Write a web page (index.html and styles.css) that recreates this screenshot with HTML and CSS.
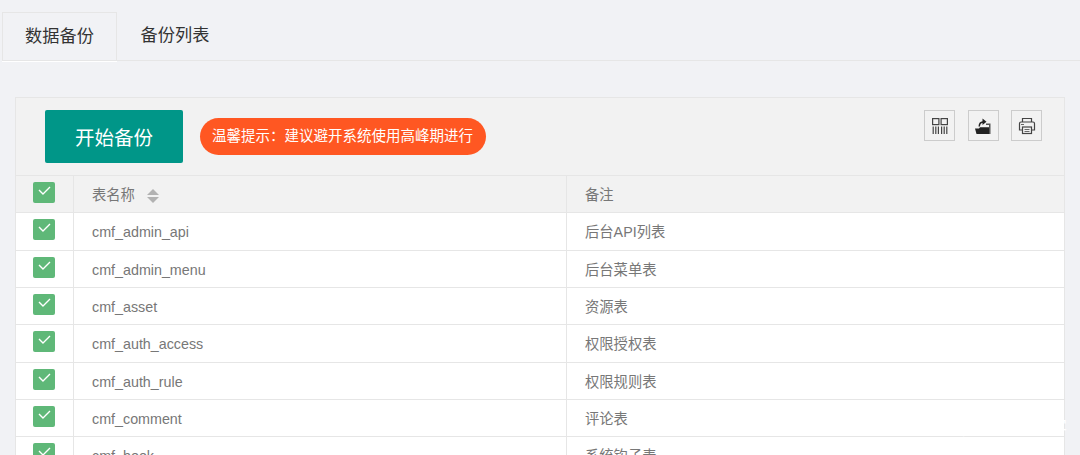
FILE: index.html
```html
<!DOCTYPE html>
<html lang="zh">
<head>
<meta charset="utf-8">
<title>数据备份</title>
<link rel="stylesheet" href="styles.css">
</head>
<body>
<div class="tabs">
  <div class="tab active">数据备份</div>
  <div class="tab">备份列表</div>
</div>
<div class="panel">
  <div class="toolbar">
    <div class="tool-left">
      <button class="start">开始备份</button>
      <span class="hint">温馨提示：建议避开系统使用高峰期进行</span>
    </div>
    <div class="tool-right">
      <span class="tool"><svg viewBox="0 0 16 16" width="16" height="16"><g fill="none" stroke="#444" stroke-width="1.2"><rect x=".6" y=".6" width="6.3" height="6"/><rect x="9.1" y=".6" width="6.3" height="6"/><path d="M1.200 8.500V16M3.800 8.500V16M6.400 8.500V16M9.600 8.500V16M12.200 8.500V16M14.800 8.500V16"/></g></svg></span>
      <span class="tool"><svg viewBox="0 0 16 16" width="16" height="16"><path d="M0 10.500h4l1-1.200h9.500l-.5 6.700H1.500z" fill="#222"/><path d="M11 5.500h4.500V16H14V7h-3z" fill="#555"/><path d="M3.500 8.500C3.500 5 5.500 3.300 7.500 3.200V.5l4 3.200-4 3.200V4.900C6 5 5 6.500 5 8.500z" fill="#222"/></svg></span>
      <span class="tool"><svg viewBox="0 0 18 18" width="18" height="18"><g fill="none" stroke="#444" stroke-width="1.2"><path d="M4.500 5V1.500h9V5"/><path d="M4.500 13H1.500V6.500Q1.500 5 3 5h12q1.500 0 1.500 1.500V13h-3"/><rect x="4.500" y="10" width="9" height="6.500"/><path d="M6.500 12.500h5M6.500 14.500h5" stroke-width=".8"/></g><path d="M3 7h3v1H3z" fill="#666"/></svg></span>
    </div>
  </div>
  <div class="row head">
    <div class="c-check"><span class="check"><svg viewBox="0 0 22 22" width="22" height="22"><path d="M6 10l4 4 7-7" fill="none" stroke="#fff" stroke-width="1.4"/></svg></span></div>
    <div class="c-name">表名称<span class="sort"><i class="up"></i><i class="down"></i></span></div>
    <div class="c-note">备注</div>
  </div>
  <div class="row">
    <div class="c-check"><span class="check"><svg viewBox="0 0 22 22" width="22" height="22"><path d="M6 10l4 4 7-7" fill="none" stroke="#fff" stroke-width="1.4"/></svg></span></div>
    <div class="c-name">cmf_admin_api</div><div class="c-note">后台API列表</div>
  </div>
  <div class="row">
    <div class="c-check"><span class="check"><svg viewBox="0 0 22 22" width="22" height="22"><path d="M6 10l4 4 7-7" fill="none" stroke="#fff" stroke-width="1.4"/></svg></span></div>
    <div class="c-name">cmf_admin_menu</div><div class="c-note">后台菜单表</div>
  </div>
  <div class="row">
    <div class="c-check"><span class="check"><svg viewBox="0 0 22 22" width="22" height="22"><path d="M6 10l4 4 7-7" fill="none" stroke="#fff" stroke-width="1.4"/></svg></span></div>
    <div class="c-name">cmf_asset</div><div class="c-note">资源表</div>
  </div>
  <div class="row">
    <div class="c-check"><span class="check"><svg viewBox="0 0 22 22" width="22" height="22"><path d="M6 10l4 4 7-7" fill="none" stroke="#fff" stroke-width="1.4"/></svg></span></div>
    <div class="c-name">cmf_auth_access</div><div class="c-note">权限授权表</div>
  </div>
  <div class="row">
    <div class="c-check"><span class="check"><svg viewBox="0 0 22 22" width="22" height="22"><path d="M6 10l4 4 7-7" fill="none" stroke="#fff" stroke-width="1.4"/></svg></span></div>
    <div class="c-name">cmf_auth_rule</div><div class="c-note">权限规则表</div>
  </div>
  <div class="row">
    <div class="c-check"><span class="check"><svg viewBox="0 0 22 22" width="22" height="22"><path d="M6 10l4 4 7-7" fill="none" stroke="#fff" stroke-width="1.4"/></svg></span></div>
    <div class="c-name">cmf_comment</div><div class="c-note">评论表</div>
  </div>
  <div class="row">
    <div class="c-check"><span class="check"><svg viewBox="0 0 22 22" width="22" height="22"><path d="M6 10l4 4 7-7" fill="none" stroke="#fff" stroke-width="1.4"/></svg></span></div>
    <div class="c-name">cmf_hook</div><div class="c-note">系统钩子表</div>
  </div>
</div>
<div class="mark">@51CTO博客</div>
```

FILE: styles.css
```css
html, body { margin: 0; padding: 0; height: 455px; overflow: hidden; }
body {
  background: #f1f2f5;
  font-family: "Liberation Sans", "Noto Sans CJK SC", sans-serif;
  color: #777;
  font-size: 14.3px;
}
.tabs {
  display: flex;
  margin: 0 0 0 2px;
  padding-top: 12px;
  height: 48px;
  border-bottom: 1px solid #e6e6e6;
}
.tab {
  width: 116px;
  height: 49px;
  line-height: 47px;
  text-align: center;
  font-size: 17.2px;
  color: #333;
  box-sizing: border-box;
}
.tab.active {
  border: 1px solid #e6e6e6;
  border-bottom: 0;
  box-shadow: 0 1px 0 #fff;
  width: 115px;
}
.panel {
  margin: 36px 15px 0;
  border-left: 1px solid #e6e6e6;
  border-right: 1px solid #e6e6e6;
  border-top: 1px solid #e6e6e6;
  background: #fff;
}
.toolbar {
  height: 78px;
  box-sizing: border-box;
  background: #f2f2f2;
  display: flex;
  justify-content: space-between;
  align-items: flex-start;
  border-bottom: 1px solid #e6e6e6;
}
.tool-left { display: flex; align-items: center; padding: 12px 0 0 29px; gap: 17px; }
.start {
  width: 138px;
  height: 53px;
  background: #009688;
  border: 0;
  border-radius: 2px;
  color: #fff;
  font: 19.5px "Liberation Sans", "Noto Sans CJK SC", sans-serif;
  padding: 0;
}
.hint {
  height: 37px;
  line-height: 37px;
  padding: 0 13px 0 12px;
  background: #ff5722;
  color: #fff;
  border-radius: 19px;
  font-size: 14.5px;
  white-space: nowrap;
  margin-top: -1px;
}
.tool-right { display: flex; gap: 12.5px; padding: 12px 22px 0 0; }
.tool {
  width: 31px;
  height: 31px;
  box-sizing: border-box;
  border: 1px solid #ccc;
  display: flex;
  align-items: center;
  justify-content: center;
}
.row {
  display: grid;
  grid-template-columns: 58px 493px 1fr;
  height: 37.33px;
  box-sizing: border-box;
  border-bottom: 1px solid #e6e6e6;
  line-height: 39px;
  background: #fff;
}
.row.head { background: #f2f2f2; height: 37.3px; }
.row > div { box-sizing: border-box; padding-left: 18px; white-space: nowrap; }
.row > .c-check {
  padding: 6px 0 0 17px;
  border-right: 1px solid #e6e6e6;
}
.row > .c-name { border-right: 1px solid #e6e6e6; }
.check {
  display: block;
  width: 22px;
  height: 21px;
  background: #5fb878;
  border-radius: 2px;
  overflow: hidden;
}
.check svg { display: block; margin-top: -2px; }
.sort { display: inline-flex; flex-direction: column; gap: 2px; margin-left: 12px; vertical-align: middle; height: 14px; }
.sort i { display: block; width: 0; height: 0; border-left: 6px solid transparent; border-right: 6px solid transparent; }
.sort .up { border-bottom: 6px solid #b2b2b2; }
.sort .down { border-top: 6px solid #b2b2b2; }
.mark {
  position: absolute;
  left: 955px;
  top: 419px;
  font-size: 18px;
  line-height: 18px;
  color: #fff;
  white-space: nowrap;
}
```
